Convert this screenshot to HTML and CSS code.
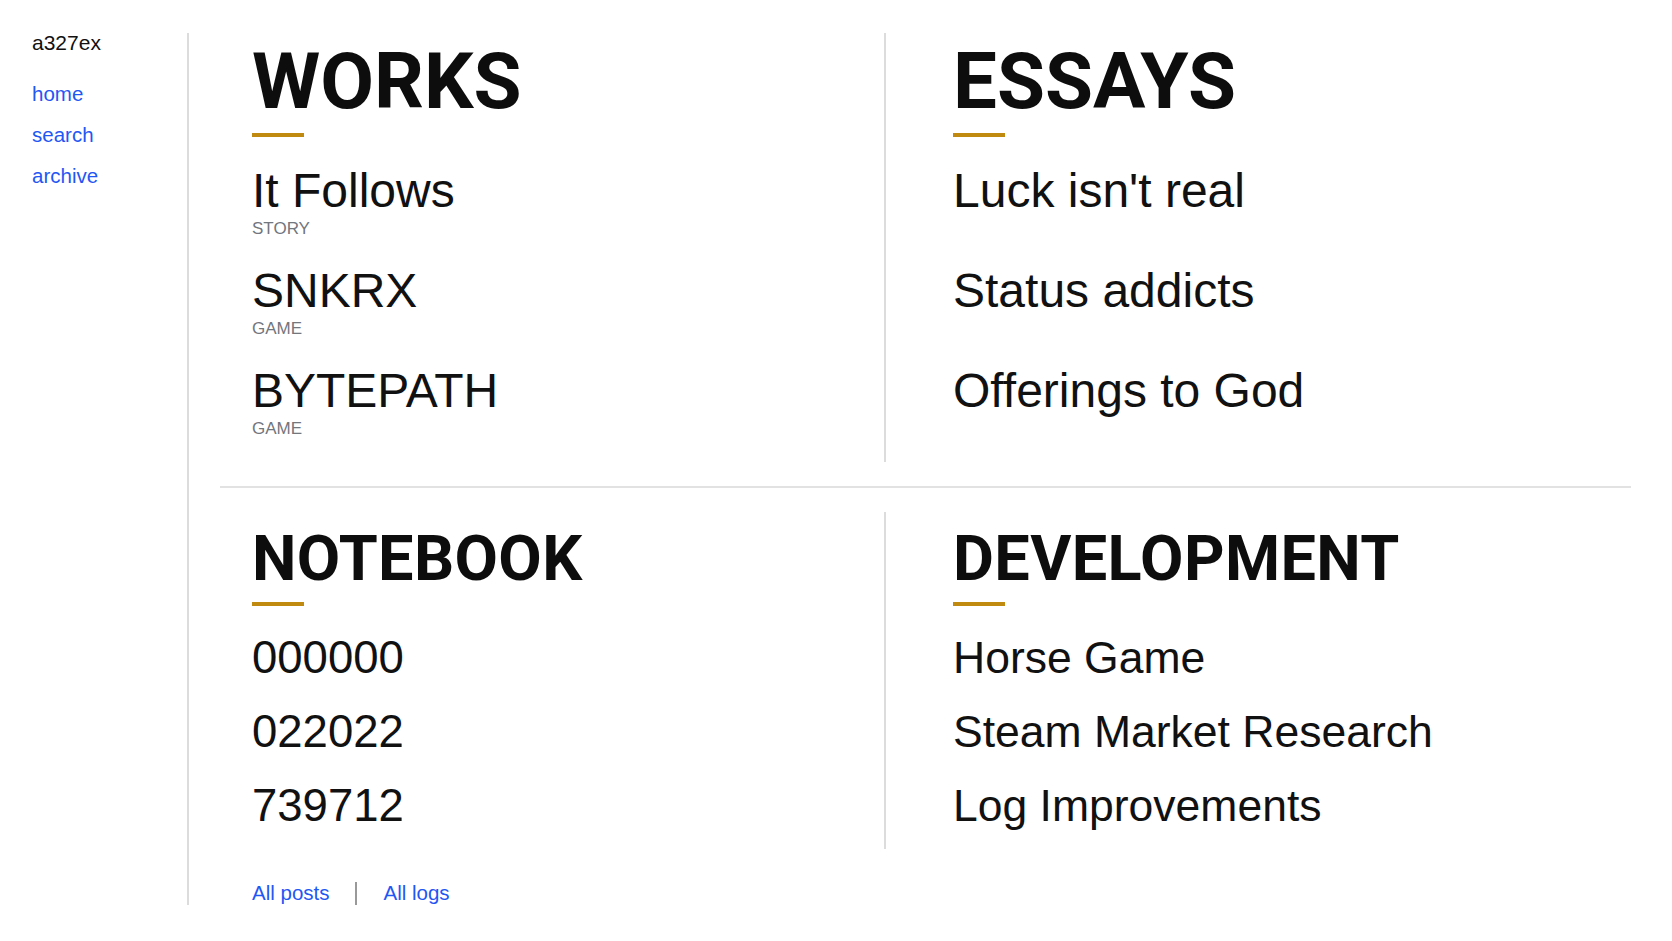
FILE: index.html
```html
<!DOCTYPE html>
<html lang="en">
<head>
  <meta charset="UTF-8" />
  <meta name="viewport" content="width=device-width, initial-scale=1.0" />
  <title>a327ex</title>
  <link rel="stylesheet" href="styles.css">
</head>
<body>
  <div class="page">
    <aside class="sidebar">
      <div class="site-name">a327ex</div>
      <nav class="side-nav">
        <a href="#">home</a>
        <a href="#">search</a>
        <a href="#">archive</a>
      </nav>
    </aside>

    <main class="content">
      <div class="row row-top">
        <section class="panel">
          <h2>WORKS</h2>
          <ul class="entries">
            <li class="entry"><a href="#">It Follows</a><span class="kind">STORY</span></li>
            <li class="entry"><a href="#">SNKRX</a><span class="kind">GAME</span></li>
            <li class="entry"><a href="#">BYTEPATH</a><span class="kind">GAME</span></li>
          </ul>
        </section>
        <section class="panel">
          <h2>ESSAYS</h2>
          <ul class="entries">
            <li class="entry"><a href="#">Luck isn't real</a></li>
            <li class="entry"><a href="#">Status addicts</a></li>
            <li class="entry"><a href="#">Offerings to God</a></li>
          </ul>
        </section>
      </div>

      <hr class="divider">

      <div class="row row-bottom">
        <section class="panel">
          <h2>NOTEBOOK</h2>
          <ul class="entries compact numbers">
            <li><a href="#">000000</a></li>
            <li><a href="#">022022</a></li>
            <li><a href="#">739712</a></li>
          </ul>
        </section>
        <section class="panel">
          <h2>DEVELOPMENT</h2>
          <ul class="entries compact">
            <li><a href="#">Horse Game</a></li>
            <li><a href="#">Steam Market Research</a></li>
            <li><a href="#">Log Improvements</a></li>
          </ul>
        </section>
      </div>

      <div class="more-links">
        <a href="#">All posts</a>
        <span class="sep"></span>
        <a href="#">All logs</a>
      </div>
    </main>
  </div>
</body>
</html>
```

FILE: styles.css
```css
body {
  font-family: "Liberation Sans", Arial, sans-serif;
  background-color: #fff;
  color: #111;
  margin: 0;
}
a {
  text-decoration: none;
  color: inherit;
}
ul {
  list-style: none;
  margin: 0;
  padding: 0;
}
.page {
  display: flex;
  align-items: flex-start;
}

/* left column */
.sidebar {
  width: 187px;
  flex-shrink: 0;
  box-sizing: border-box;
  padding: 31px 0 0 32px;
}
.site-name {
  font-size: 21px;
  line-height: 24px;
  color: #111;
}
.side-nav {
  display: flex;
  flex-direction: column;
  gap: 17px;
  margin-top: 27px;
}
.side-nav a,
.more-links a {
  font-size: 20.5px;
  line-height: 24px;
  color: #1f57f5;
}

/* main area */
.content {
  flex: 1;
  margin-top: 33px;
  border-left: 2px solid #dcdcdc;
  padding: 0 41px 0 31px;
}
.row {
  display: grid;
  grid-template-columns: 664px 1fr;
}
.row-top {
  padding: 10px 0 23px;
}
.row-bottom {
  padding: 15px 0 16px;
}
.panel {
  padding-left: 32px;
}
.panel + .panel {
  border-left: 2px solid #dcdcdc;
  padding-left: 67px;
}
.row-top .panel + .panel {
  margin-top: -10px;
  padding-top: 10px;
  margin-bottom: -23px;
  padding-bottom: 23px;
}
.row-bottom .panel + .panel {
  margin-top: -15px;
  padding-top: 15px;
  margin-bottom: -16px;
  padding-bottom: 16px;
}
.panel h2 {
  font-family: Roboto, "Liberation Sans", sans-serif;
  font-weight: 700;
  font-size: 78px;
  line-height: 1;
  margin: 0;
  color: #0d0d0d;
}
.row-bottom .panel h2 {
  font-size: 63px;
  letter-spacing: 0.4px;
}
.panel h2::after {
  content: "";
  display: block;
  width: 52px;
  height: 4px;
  margin-top: 12px;
  background: #c0890f;
}

.entries {
  display: flex;
  flex-direction: column;
  gap: 28px;
  margin-top: 30px;
}
.entry {
  min-height: 72px;
  display: flex;
  flex-direction: column;
  align-items: flex-start;
}
.entry a {
  font-size: 48px;
  line-height: 48px;
}
.kind {
  margin-top: 4px;
  font-size: 17px;
  line-height: 20px;
  color: #72767d;
}
.entries.compact {
  gap: 20px;
  margin-top: 25px;
}
.entries.compact a {
  font-size: 44.5px;
  line-height: 54px;
}
.entries.numbers a {
  font-size: 45.5px;
}

.divider {
  border: 0;
  border-top: 2px solid #e2e2e2;
  margin: 24px 0;
}

.more-links {
  display: flex;
  align-items: center;
  gap: 26px;
  margin-top: 32px;
  padding-left: 32px;
}
.sep {
  width: 0;
  height: 23px;
  border-left: 2px solid #999;
}
```
